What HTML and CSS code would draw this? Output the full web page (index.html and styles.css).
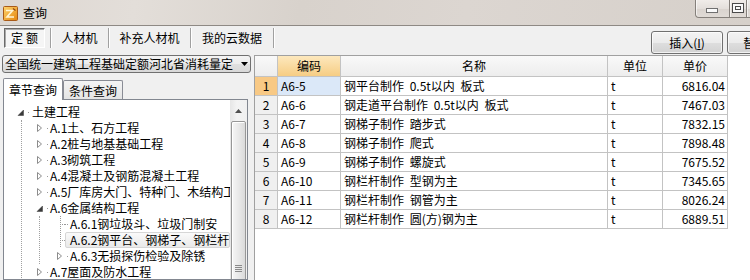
FILE: index.html
```html
<!DOCTYPE html>
<html lang="zh-CN">
<head>
<meta charset="utf-8">
<title>查询</title>
<link rel="stylesheet" href="styles.css">
</head>
<body>
<div class="window">
  <header class="titlebar">
    <svg class="app-icon" width="15" height="15" viewBox="0 0 15 15">
      <defs><linearGradient id="ig" x1="0" y1="0" x2="1" y2="1"><stop offset="0" stop-color="#ffd66e"/><stop offset="1" stop-color="#e5860e"/></linearGradient></defs>
      <rect x="0.5" y="0.5" width="14" height="14" rx="1" fill="url(#ig)" stroke="#a85a18"/>
      <path d="M3 4.5h6.5L4 11h7" fill="none" stroke="#fff6d8" stroke-width="1.6"/>
      <path d="M10 2.5l2.5 2" stroke="#8f4510" stroke-width="1.2"/>
    </svg>
    <span class="title">查询</span>
    <div class="winbtns">
      <span class="wb wb-min"><svg width="12" height="5" viewBox="0 0 12 5"><rect x="0.5" y="0.5" width="11" height="4" fill="#fafafa" stroke="#707070"/></svg></span>
      <span class="wb wb-max"><svg width="12" height="10" viewBox="0 0 12 10"><rect x="0.5" y="0.5" width="11" height="9" fill="#fafafa" stroke="#4a4a4a"/><rect x="3.5" y="3.5" width="5" height="3" fill="none" stroke="#4a4a4a"/></svg></span>
      <span class="wb wb-close"></span>
    </div>
  </header>

  <div class="toolbar">
    <div class="tabs">
      <div class="tab tab-1"><span class="tab-pressed">定额</span></div>
      <div class="tab tab-2">人材机</div>
      <div class="tab tab-3">补充人材机</div>
      <div class="tab tab-4">我的云数据</div>
    </div>
    <div class="actions">
      <button class="btn">插入(<u>I</u>)</button>
      <button class="btn">替换(<u>R</u>)</button>
    </div>
  </div>

  <div class="main">
    <aside class="left">
      <div class="combo">
        <span class="combo-text">全国统一建筑工程基础定额河北省消耗量定</span>
        <svg class="combo-arrow" width="7" height="4" viewBox="0 0 7 4"><path d="M0 0h7L3.5 4z" fill="#000"/></svg>
      </div>
      <div class="subtabs">
        <div class="subtab active">章节查询</div>
        <div class="subtab">条件查询</div>
      </div>
      <div class="treebox">
        <div class="tree">
          <div class="node lv0"><span class="exp"><svg width="10" height="16" viewBox="0 0 10 16"><path d="M7.5 6V11.5H2Z" fill="#3a3a3a" stroke="#3a3a3a" stroke-width=".5" stroke-linejoin="round"/></svg></span><span class="stub"></span><span class="lbl">土建工程</span></div>
          <div class="group g1">
            <div class="node lv1"><span class="exp"><svg width="10" height="16" viewBox="0 0 10 16"><path d="M2.5 4.5L6.5 8L2.5 11.5Z" fill="#fff" stroke="#8c8c8c"/></svg></span><span class="stub"></span><span class="lbl">A.1土、石方工程</span></div>
            <div class="node lv1"><span class="exp"><svg width="10" height="16" viewBox="0 0 10 16"><path d="M2.5 4.5L6.5 8L2.5 11.5Z" fill="#fff" stroke="#8c8c8c"/></svg></span><span class="stub"></span><span class="lbl">A.2桩与地基基础工程</span></div>
            <div class="node lv1"><span class="exp"><svg width="10" height="16" viewBox="0 0 10 16"><path d="M2.5 4.5L6.5 8L2.5 11.5Z" fill="#fff" stroke="#8c8c8c"/></svg></span><span class="stub"></span><span class="lbl">A.3砌筑工程</span></div>
            <div class="node lv1"><span class="exp"><svg width="10" height="16" viewBox="0 0 10 16"><path d="M2.5 4.5L6.5 8L2.5 11.5Z" fill="#fff" stroke="#8c8c8c"/></svg></span><span class="stub"></span><span class="lbl">A.4混凝土及钢筋混凝土工程</span></div>
            <div class="node lv1"><span class="exp"><svg width="10" height="16" viewBox="0 0 10 16"><path d="M2.5 4.5L6.5 8L2.5 11.5Z" fill="#fff" stroke="#8c8c8c"/></svg></span><span class="stub"></span><span class="lbl">A.5厂库房大门、特种门、木结构工程</span></div>
            <div class="node lv1"><span class="exp"><svg width="10" height="16" viewBox="0 0 10 16"><path d="M7.5 6V11.5H2Z" fill="#3a3a3a" stroke="#3a3a3a" stroke-width=".5" stroke-linejoin="round"/></svg></span><span class="stub"></span><span class="lbl">A.6金属结构工程</span></div>
            <div class="group g2">
              <div class="node lv2"><span class="exp leaf"></span><span class="stub dotted"></span><span class="lbl">A.6.1钢垃圾斗、垃圾门制安</span></div>
              <div class="node lv2"><span class="exp leaf"></span><span class="stub dotted"></span><span class="lbl sel">A.6.2钢平台、钢梯子、钢栏杆制作</span></div>
              <div class="node lv2"><span class="exp"><svg width="10" height="16" viewBox="0 0 10 16"><path d="M2.5 4.5L6.5 8L2.5 11.5Z" fill="#fff" stroke="#8c8c8c"/></svg></span><span class="stub"></span><span class="lbl">A.6.3无损探伤检验及除锈</span></div>
            </div>
            <div class="node lv1"><span class="exp"><svg width="10" height="16" viewBox="0 0 10 16"><path d="M2.5 4.5L6.5 8L2.5 11.5Z" fill="#fff" stroke="#8c8c8c"/></svg></span><span class="stub"></span><span class="lbl">A.7屋面及防水工程</span></div>
            <div class="node lv1"><span class="exp"><svg width="10" height="16" viewBox="0 0 10 16"><path d="M2.5 4.5L6.5 8L2.5 11.5Z" fill="#fff" stroke="#8c8c8c"/></svg></span><span class="stub"></span><span class="lbl">A.8防腐、隔热、保温工程</span></div>
          </div>
        </div>
        <div class="vscroll">
          <div class="sb-up"><svg width="7" height="4" viewBox="0 0 7 4"><path d="M0 4L3.5 0L7 4Z" fill="#505050"/></svg></div>
          <div class="sb-thumb"><svg width="7" height="7" viewBox="0 0 7 7"><path d="M0 .5h7M0 2.5h7M0 4.5h7M0 6.5h7" stroke="#8a8a8a"/></svg></div>
        </div>
      </div>
    </aside>

    <section class="grid">
      <div class="table">
        <div class="c h"></div>
        <div class="c h active">编码</div>
        <div class="c h">名称</div>
        <div class="c h">单位</div>
        <div class="c h">单价</div>

        <div class="c rn active">1</div><div class="c code active">A6-5</div><div class="c name">钢平台制作 0.5t以内 板式</div><div class="c unit">t</div><div class="c price">6816.04</div>
        <div class="c rn">2</div><div class="c code">A6-6</div><div class="c name">钢走道平台制作 0.5t以内 板式</div><div class="c unit">t</div><div class="c price">7467.03</div>
        <div class="c rn">3</div><div class="c code">A6-7</div><div class="c name">钢梯子制作 踏步式</div><div class="c unit">t</div><div class="c price">7832.15</div>
        <div class="c rn">4</div><div class="c code">A6-8</div><div class="c name">钢梯子制作 爬式</div><div class="c unit">t</div><div class="c price">7898.48</div>
        <div class="c rn">5</div><div class="c code">A6-9</div><div class="c name">钢梯子制作 螺旋式</div><div class="c unit">t</div><div class="c price">7675.52</div>
        <div class="c rn">6</div><div class="c code">A6-10</div><div class="c name">钢栏杆制作 型钢为主</div><div class="c unit">t</div><div class="c price">7345.65</div>
        <div class="c rn">7</div><div class="c code">A6-11</div><div class="c name">钢栏杆制作 钢管为主</div><div class="c unit">t</div><div class="c price">8026.24</div>
        <div class="c rn">8</div><div class="c code">A6-12</div><div class="c name">钢栏杆制作 圆(方)钢为主</div><div class="c unit">t</div><div class="c price">6889.51</div>
      </div>
    </section>
  </div>
</div>
</body>
</html>
```

FILE: styles.css
```css
* { box-sizing: border-box; }

body {
  margin: 0;
  width: 750px;
  height: 280px;
  overflow: hidden;
  background: #f0f0f0;
  font-family: "Noto Sans CJK SC", sans-serif;
  font-size: 12px;
  line-height: 16px;
  color: #000;
}

.window {
  width: 750px;
  height: 280px;
  display: flex;
  flex-direction: column;
  overflow: hidden;
}

/* ---------- title bar ---------- */
.titlebar {
  flex: none;
  height: 26px;
  display: flex;
  align-items: flex-start;
  border-bottom: 1px solid #8e8984;
  background: linear-gradient(100deg, #ddd7d1 0%, #e3ded9 18%, #d8d2cc 40%, #dcd6d1 62%, #d6d0ca 100%);
  overflow: hidden;
}
.app-icon { flex: none; margin: 6px 0 0 3px; }
.title { margin: 5px 0 0 5px; }

.winbtns {
  margin-left: auto;
  margin-right: -42px;
  display: flex;
  flex: none;
}
.wb {
  height: 18px;
  border-right: 1px solid #85807b;
  border-bottom: 1px solid #85807b;
  background: linear-gradient(#f0ece9, #e4dfdb 50%, #d9d3ce 51%, #e0dbd6);
  display: flex;
  justify-content: center;
  box-shadow: inset 1px 0 0 rgba(255,255,255,.6);
}
.wb-min {
  width: 35px;
  border-left: 1px solid #85807b;
  border-bottom-left-radius: 4px;
  padding: 8px 2px 0 0;
}
.wb-max { width: 17px; padding-top: 3px; }
.wb-close { width: 45px; border-bottom-right-radius: 4px; }

/* ---------- toolbar ---------- */
.toolbar {
  flex: none;
  height: 29px;
  display: flex;
  align-items: flex-start;
}
.tabs { display: flex; margin: 2px 0 0 3px; }
.tab {
  height: 20px;
  display: flex;
  align-items: center;
  justify-content: center;
  border-right: 1px solid #a0a0a0;
  box-shadow: 1px 0 0 #fff;
}
.tab-1 { width: 48px; justify-content: flex-start; }
.tab-2 { width: 58px; }
.tab-3 { width: 82px; }
.tab-4 { width: 83px; }
.tab-pressed {
  margin-left: 1px;
  width: 41px;
  height: 20px;
  border: 1px solid;
  border-color: #6a6a6a #ffffff #ffffff #6a6a6a;
  box-shadow: inset 1px 1px 0 #a9a9a9;
  background: #f5f5f5;
  display: flex;
  align-items: center;
  justify-content: center;
  padding-left: 3px;
  letter-spacing: 3px;
}

.actions {
  margin: 5px -49px 0 auto;
  display: flex;
  gap: 4px;
  flex: none;
}
.btn {
  width: 72px;
  height: 23px;
  padding: 0;
  border: 1px solid #707070;
  border-radius: 3px;
  background: linear-gradient(#f3f3f3, #ebebeb 50%, #dedede 51%, #d2d2d2);
  box-shadow: inset 0 0 0 1px rgba(255,255,255,.7);
  font: inherit;
  color: #000;
}
.btn u { text-decoration: underline; }

/* ---------- main ---------- */
.main {
  flex: 1;
  min-height: 0;
  display: flex;
}
.left {
  width: 254px;
  flex: none;
  display: flex;
  flex-direction: column;
}

.combo {
  margin-left: 2px;
  width: 249px;
  height: 18px;
  flex: none;
  border: 1px solid #707070;
  border-radius: 3px;
  background: linear-gradient(#f4f4f4, #ececec 50%, #e0e0e0 51%, #d8d8d8);
  display: flex;
  align-items: center;
  padding-left: 2px;
}
.combo-text {
  width: 230px;
  overflow: hidden;
  white-space: nowrap;
}
.combo-arrow { margin-left: auto; margin-right: 2px; }

.subtabs {
  flex: none;
  height: 21px;
  margin: 5px 0 0 3px;
  display: flex;
  align-items: flex-end;
}
.subtab {
  width: 60px;
  height: 19px;
  border: 1px solid #898c95;
  border-bottom: none;
  border-radius: 2px 2px 0 0;
  background: linear-gradient(#f4f4f4, #e4e4e4);
  display: flex;
  align-items: center;
  justify-content: center;
  padding-top: 2px;
}
.subtab.active {
  height: 22px;
  margin-bottom: -1px;
  padding-top: 0;
  background: #fff;
  position: relative;
  z-index: 1;
}

.treebox {
  flex: 1;
  min-height: 0;
  margin-left: 3px;
  width: 245px;
  border: 1px solid #828790;
  background: #fff;
  display: flex;
  overflow: hidden;
}
.tree {
  flex: 1;
  min-width: 0;
  overflow: hidden;
  padding-top: 4px;
}
.node {
  height: 16px;
  display: flex;
  align-items: stretch;
  white-space: nowrap;
}
.lv0 { padding-left: 12px; }
.lv1 { padding-left: 13px; }
.lv2 { padding-left: 15px; }
.exp { width: 10px; flex: none; display: flex; }
.exp.leaf {
  background:
    repeating-linear-gradient(to bottom, #9a9a9a 0 1px, transparent 1px 2px) 5px 0 / 1px 100% no-repeat,
    repeating-linear-gradient(to right, #9a9a9a 0 1px, transparent 1px 2px) 5px 8px / 5px 1px no-repeat;
}
.stub {
  width: 5px;
  flex: none;
  background: linear-gradient(#9a9a9a, #9a9a9a) 2px 8px / 1px 1px no-repeat;
}
.lv0 .stub { width: 6px; }
.stub.dotted {
  background: repeating-linear-gradient(to right, #9a9a9a 0 1px, transparent 1px 2px) 0 8px / 4px 1px no-repeat;
}
.lbl { line-height: 16px; }
.lbl.sel {
  flex: 1;
  margin-left: -5px;
  padding-left: 4px;
  border: 1px solid #d6d6d6;
  border-radius: 2px;
  line-height: 14px;
  background: linear-gradient(#fafafa, #e9e9e9);
  overflow: hidden;
}
.group { border-left: 1px dotted #a0a0a0; margin-left: 17px; }

.vscroll {
  width: 17px;
  flex: none;
  display: flex;
  flex-direction: column;
  background: linear-gradient(to right, #e6e6e6, #f3f3f3 40%, #f0f0f0);
}
.sb-up {
  height: 18px;
  flex: none;
  display: flex;
  justify-content: center;
  padding-top: 9px;
}
.sb-thumb {
  flex: none;
  height: 294px;
  margin: 3px 1px 0;
  border: 1px solid #979797;
  border-radius: 2px;
  background: linear-gradient(to right, #f6f6f6, #e9e9e9 50%, #dadada);
  box-shadow: inset 1px 1px 0 #fff;
  display: flex;
  align-items: center;
  justify-content: center;
}

/* ---------- grid ---------- */
.grid {
  flex: 1;
  background: #fff;
  border-left: 1px solid #a0a0a0;
  border-top: 1px solid #a0a0a0;
}
.table {
  display: grid;
  grid-template-columns: 23px 63px 267px 55px 65px;
  width: max-content;
}
.c {
  height: 19px;
  border-right: 1px solid #c3c3c3;
  border-bottom: 1px solid #c3c3c3;
  display: flex;
  align-items: center;
  padding: 0 3px;
  white-space: nowrap;
  overflow: hidden;
}
.h {
  height: 21px;
  justify-content: center;
  background: linear-gradient(#f9f9f9, #ededed);
}
.h.active { background: linear-gradient(#fde8bd, #f6cd84); }
.rn { justify-content: center; background: #f0f0f0; }
.rn.active { background: #f8c985; }
.code.active { background: #dbe8f8; }
.name { word-spacing: 3px; }
.price { justify-content: flex-end; padding-right: 2px; }
```
